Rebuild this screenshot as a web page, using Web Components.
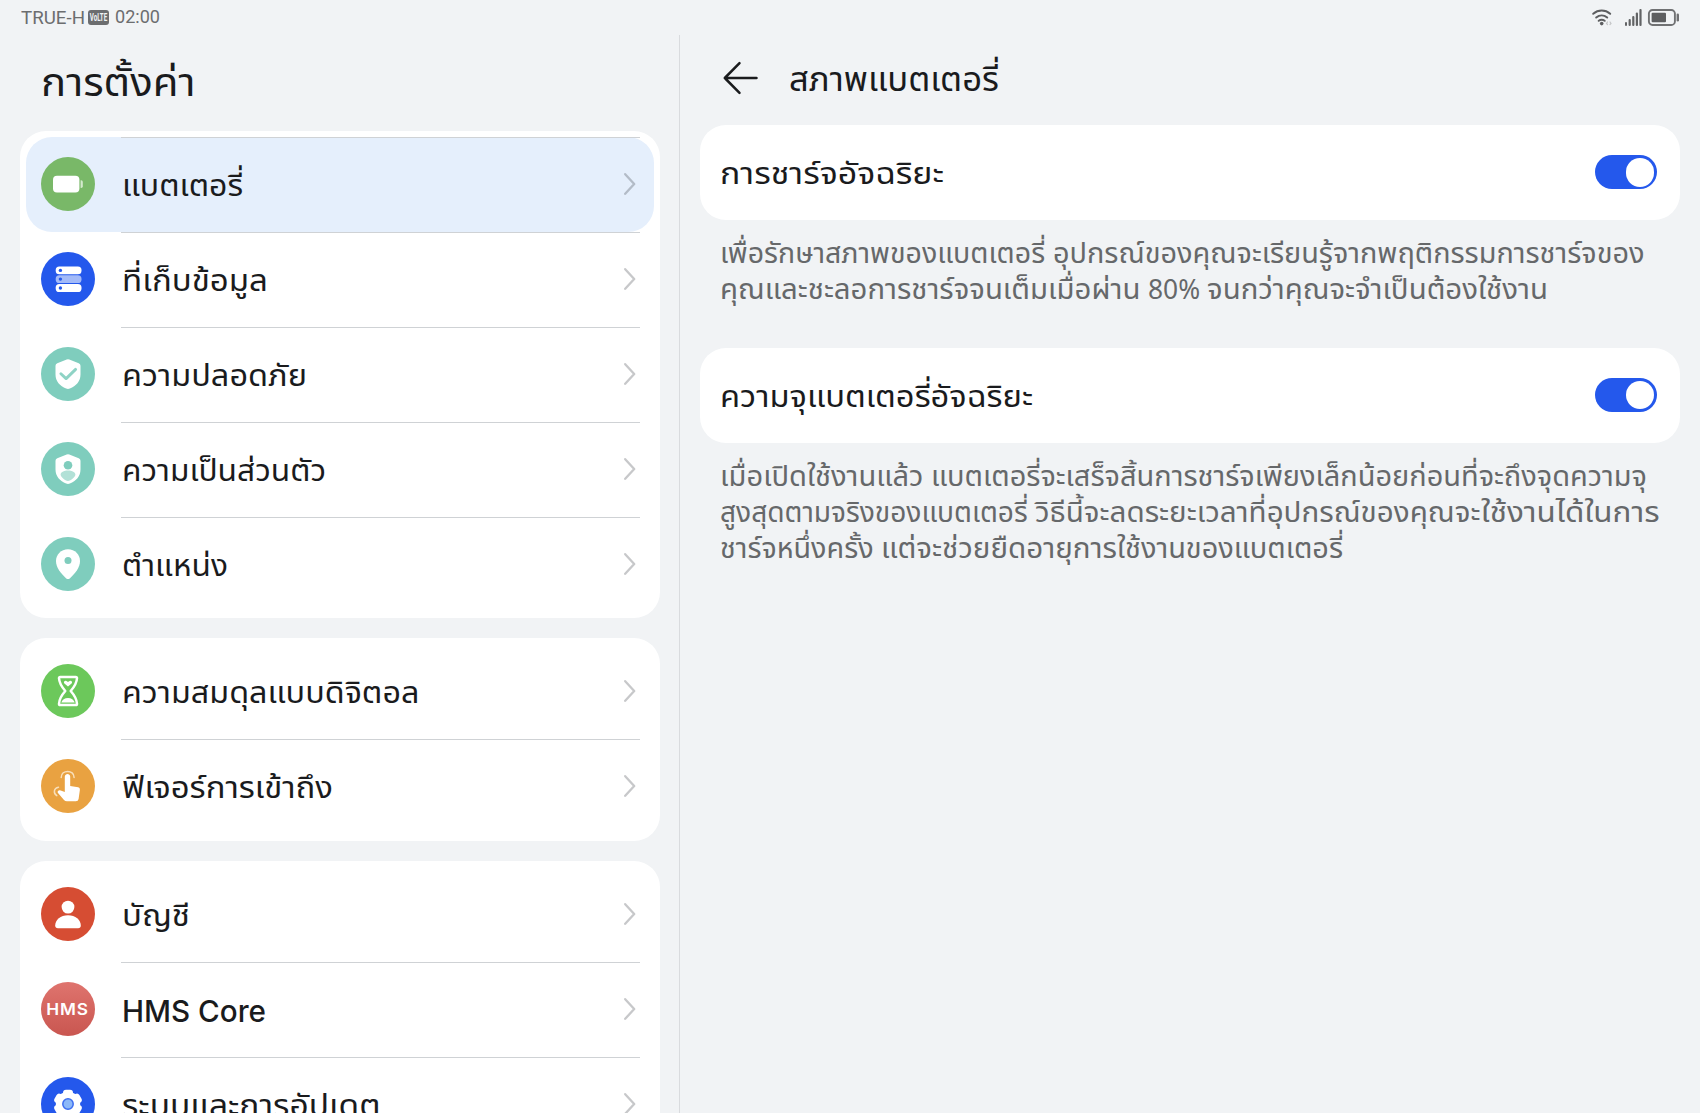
<!DOCTYPE html>
<html lang="th">
<head>
<meta charset="utf-8">
<title>การตั้งค่า</title>
<style>
  html, body { margin: 0; height: 100%; overflow: hidden; }
  body {
    background: #f1f3f5;
    color: #1a1b1d;
    font-family: "Noto Sans Thai", "Noto Sans", sans-serif;
  }
</style>
</head>
<body>
<settings-app></settings-app>

<script>
const ICONS = {
  battery: `
    <circle cx="27" cy="27" r="27" fill="#79b868"/>
    <rect x="12" y="18.8" width="26.4" height="16.6" rx="4" fill="#fff"/>
    <path d="M39.6 23.3h.6q1.6 0 1.6 1.6v4.4q0 1.6-1.6 1.6h-.6z" fill="#d3e9cd"/>`,
  storage: `
    <circle cx="27" cy="27" r="27" fill="#2458ec"/>
    <rect x="14.7" y="14.5" width="25.8" height="7.8" rx="3.6" fill="#fff"/>
    <rect x="14.7" y="23.2" width="25.8" height="7.8" rx="3.6" fill="#a3baf8"/>
    <rect x="14.7" y="32" width="25.8" height="8" rx="3.6" fill="#fff"/>
    <g fill="#2458ec"><circle cx="19.4" cy="18.4" r="1.7"/><circle cx="19.4" cy="27.1" r="1.7"/><circle cx="19.4" cy="36" r="1.7"/></g>`,
  security: `
    <circle cx="27" cy="27" r="27" fill="#7fcdbd"/>
    <path d="M25.7 12.5q1.3-.6 2.6 0l9.4 3.7q1.8.7 1.8 2.6v8.6c0 7-4.5 11.4-10.6 14.2q-1.9.8-3.8 0C19 38.8 14.5 34.4 14.5 27.4v-8.6q0-1.9 1.8-2.6z" fill="#fff"/>
    <path d="M19.9 26.8l5.2 4.8 9.5-9.2" fill="none" stroke="#8fd3c5" stroke-width="2.9" stroke-linecap="round" stroke-linejoin="round"/>`,
  privacy: `
    <circle cx="27" cy="27" r="27" fill="#7fcdbd"/>
    <path d="M25.7 12.5q1.3-.6 2.6 0l9.4 3.7q1.8.7 1.8 2.6v8.6c0 7-4.5 11.4-10.6 14.2q-1.9.8-3.8 0C19 38.8 14.5 34.4 14.5 27.4v-8.6q0-1.9 1.8-2.6z" fill="#fff"/>
    <circle cx="27" cy="23.2" r="4.3" fill="#7fcdbd"/>
    <path d="M27 28.6c4.2 0 7.4 1.7 7.4 4 0 2.4-4.4 6.3-7.4 6.3s-7.4-3.9-7.4-6.3c0-2.3 3.2-4 7.4-4z" fill="#b2e1d7"/>`,
  location: `
    <circle cx="27" cy="27" r="27" fill="#7fcdbd"/>
    <path d="M27 12.3c6.9 0 12 5.2 12 11.7 0 6.6-4.7 12.2-10 17.2q-2 1.7-4 0c-5.3-5-10-10.6-10-17.2 0-6.5 5.1-11.7 12-11.7z" fill="#fff"/>
    <circle cx="27" cy="23.4" r="3.5" fill="#7fcdbd"/>`,
  balance: `
    <circle cx="27" cy="27" r="27" fill="#6cc85b"/>
    <path d="M19.2 12.9h15.6q1.2 0 1.2 1.4c-.3 5.2-2.4 8.3-6.3 12.7 3.9 4.4 6 7.5 6.3 12.7q0 1.4-1.2 1.4H19.2q-1.2 0-1.2-1.4c.3-5.2 2.4-8.3 6.3-12.7-3.9-4.4-6-7.5-6.3-12.7q0-1.4 1.2-1.4z" fill="none" stroke="#fff" stroke-width="2.5" stroke-linejoin="round"/>
    <path d="M27 22.6l-3.6-3.2c-1.3-1.2.2-3.1 2-2.4q1 .4 1.6.9.6-.5 1.6-.9c1.8-.7 3.3 1.2 2 2.4z" fill="#fff"/>
    <path d="M20.3 38.6c.8-2.5 3.4-4.6 6.7-4.6s5.9 2.1 6.7 4.6z" fill="#fff"/>`,
  touch: `
    <circle cx="27" cy="27" r="27" fill="#e9a241"/>
    <path d="M23.8 17.6c.2-1.8 1.4-2.7 2.7-2.7s2.7 1 2.7 2.7v9.3l8 1.4q1.9.4 1.7 2.4l-1.3 9.2q-.4 2.4-2.8 2.4h-8.9q-1.7 0-2.9-1.2L17 34.1q-.9-1.1 0-2.2 1.2-1.1 2.7-.4l4.1 1.4z" fill="#fff"/>
    <g fill="none" stroke="#f8dfba" stroke-width="1.5" stroke-linecap="round">
      <path d="M20.2 18.4c0-8 13-8 12.9 0"/>
      <path d="M17.5 28.2c-5 .8-5.3 6.3-1.7 8.4"/>
    </g>`,
  account: `
    <circle cx="27" cy="27" r="27" fill="#d64d33"/>
    <circle cx="27" cy="20.1" r="6.4" fill="#fff"/>
    <path d="M27 28.3c7.4 0 12.8 4.5 12.8 10.2 0 1.8-1 2.7-2.7 2.7H16.9c-1.7 0-2.7-.9-2.7-2.7 0-5.7 5.4-10.2 12.8-10.2z" fill="#fff"/>`,
  hms: `
    <defs><linearGradient id="g" x1="0" y1="0" x2="0" y2="1"><stop offset="0" stop-color="#df746e"/><stop offset="1" stop-color="#c95650"/></linearGradient></defs>
    <circle cx="27" cy="27" r="27" fill="url(#g)"/>
    <text x="5.3" y="33.3" textLength="42.5" lengthAdjust="spacingAndGlyphs" font-family="Inter, sans-serif" font-size="16.5" font-weight="600" letter-spacing=".8" fill="#fff">HMS</text>`,
  system: `
    <circle cx="27" cy="27" r="27" fill="#2458ec"/>
    <g fill="#fff">
      <circle cx="27" cy="27" r="12.2"/>
      ${[0, 60, 120].map(a => `<rect x="22" y="12.7" width="10" height="28.6" rx="3" transform="rotate(${a} 27 27)"/>`).join('')}
    </g>
    <circle cx="27" cy="27" r="5.2" fill="#8cb8f8" stroke="#3c6df0" stroke-width="1.5"/>`,
};

const GROUPS = [
  [
    { icon: 'battery', label: 'แบตเตอรี่', width: 121, selected: true },
    { icon: 'storage', label: 'ที่เก็บข้อมูล', width: 146 },
    { icon: 'security', label: 'ความปลอดภัย', width: 185 },
    { icon: 'privacy', label: 'ความเป็นส่วนตัว', width: 204 },
    { icon: 'location', label: 'ตำแหน่ง', width: 106 },
  ],
  [
    { icon: 'balance', label: 'ความสมดุลแบบดิจิตอล', width: 297.5 },
    { icon: 'touch', label: 'ฟีเจอร์การเข้าถึง', width: 211 },
  ],
  [
    { icon: 'account', label: 'บัญชี', width: 68 },
    { icon: 'hms', label: 'HMS Core', width: 144, latin: true },
    { icon: 'system', label: 'ระบบและการอัปเดต', width: 258.5 },
  ],
];

// Each note line is a list of [text, width] runs.
const OPTIONS = [
  {
    label: 'การชาร์จอัจฉริยะ',
    width: 224,
    lines: [
      [['เพื่อรักษาสภาพของแบตเตอรี่ ', 332.5], ['อุปกรณ์ของคุณจะเรียนรู้จากพฤติกรรมการชาร์จของ', 591.5]],
      [['คุณและชะลอการชาร์จจนเต็มเมื่อผ่าน ', 428], ['80% ', 59], ['จนกว่าคุณจะจำเป็นต้องใช้งาน', 341]],
    ],
  },
  {
    label: 'ความจุแบตเตอรี่อัจฉริยะ',
    width: 313,
    lines: [
      [['เมื่อเปิดใช้งานแล้ว ', 211], ['แบตเตอรี่จะเสร็จสิ้นการชาร์จเพียงเล็กน้อยก่อนที่จะถึงจุดความจุ', 716]],
      [['สูงสุดตามจริงของแบตเตอรี่ ', 315], ['วิธีนี้จะลดระยะเวลาที่อุปกรณ์ของคุณจะ', 445.5], ['ใช้งานได้ในการ', 178.5]],
      [['ชาร์จหนึ่งครั้ง ', 161], ['แต่จะช่วยยืดอายุการ', 236], ['ใช้งานของแบตเตอรี่', 226]],
    ],
  },
];

// One run of text, stretched so that it takes up the given width.
class FitText extends HTMLElement {
  constructor() {
    super();
    this.attachShadow({ mode: 'open' });
    this.shadowRoot.innerHTML = `
      <style>
        :host { display: block; flex: none; white-space: nowrap; }
        span { display: inline-block; white-space: pre; transform-origin: 0 50%; }
      </style>
      <span><slot></slot></span>
    `;
  }

  connectedCallback() {
    const target = Number(this.getAttribute('width'));
    if (!target) return;
    this.textContent = this.textContent.replace(/ $/, '\u00a0');
    const span = this.shadowRoot.querySelector('span');
    const scale = target / span.getBoundingClientRect().width;
    span.style.transform = `scaleX(${scale.toFixed(4)})`;
    this.style.width = `${target}px`;
  }
}

class StatusBar extends HTMLElement {
  constructor() {
    super();
    this.attachShadow({ mode: 'open' });
    this.shadowRoot.innerHTML = `
      <style>
        :host {
          display: flex;
          align-items: center;
          height: 35px;
          padding: 0 20px 0 21px;
          box-sizing: border-box;
          color: #6c6d6f;
          font: 17.5px/35px Roboto, sans-serif;
        }
        svg { display: block; flex: none; overflow: visible; }
        .carrier { padding-top: 1px; }
        .volte { margin: 0 6px 0 3px; }
        .time { font-size: 18px; margin-top: -2px; }
        .wifi { margin-left: auto; }
        .signal { margin: 0 6px 0 12px; }
      </style>
      <fit-text class="carrier" width="64">TRUE-H</fit-text>
      <svg class="volte" width="21" height="15" viewBox="0 0 21 15">
        <rect width="21" height="15" rx="3" fill="#6c6d6f"/>
        <text x="1.8" y="11" textLength="17.4" lengthAdjust="spacingAndGlyphs" font-family="Roboto, sans-serif" font-size="10" font-weight="700" fill="#f1f3f5">VoLTE</text>
      </svg>
      <fit-text class="time" width="45">02:00</fit-text>
      <svg class="wifi" width="21" height="17" viewBox="0 0 21 17" fill="none" stroke="#5d5e60" stroke-width="2" stroke-linecap="round">
        <path d="M1.2 4.8c5-4.3 12-4.3 17 0M4.2 8.5c3.3-2.8 7.7-2.8 11 0M6.7 11.8c2-1.5 4-1.5 6 0"/>
        <circle cx="9.7" cy="14.6" r="1.8" fill="#5d5e60" stroke="none"/>
        <path d="M15.5 13l-1 1.5 1 1M18 13l1 1.5-1 1" stroke="#c4c5c7" stroke-width="1.2"/>
      </svg>
      <svg class="signal" width="17" height="17" viewBox="0 0 17 17" fill="#626365">
        <rect x="0" y="13" width="2" height="4" rx="1"/>
        <rect x="3.6" y="10" width="2.2" height="7" rx="1"/>
        <rect x="7.2" y="7" width="2.2" height="10" rx="1"/>
        <rect x="10.8" y="3.5" width="2.2" height="13.5" rx="1"/>
        <rect x="14.4" y="0" width="2.2" height="17" rx="1"/>
      </svg>
      <svg width="32" height="17" viewBox="0 0 32 17">
        <rect x=".9" y="1" width="26" height="15" rx="3.6" fill="none" stroke="#707173" stroke-width="1.9"/>
        <rect x="3.6" y="3.7" width="14.4" height="9.6" rx="1" fill="#5d5e60"/>
        <rect x="28.6" y="4.5" width="2.4" height="8" rx="1.2" fill="#707173"/>
      </svg>
    `;
  }
}

class SettingsRow extends HTMLElement {
  constructor() {
    super();
    this.attachShadow({ mode: 'open' });
  }

  connectedCallback() {
    this.shadowRoot.innerHTML = `
      <style>
        :host {
          display: flex;
          align-items: center;
          height: 95px;
          margin: 0 6px;
          padding: 0 18px 1.5px 15px;
          box-sizing: border-box;
          border-radius: 26px;
          font-size: 30.5px;
        }
        :host([selected]) { background: #e5effc; }
        :host([latin]) { font: 450 30px Inter, sans-serif; }
        .icon { flex: none; width: 54px; height: 54px; }
        .label { margin-left: 26.5px; line-height: 40px; padding-top: 6px; }
        :host([latin]) .label { padding-top: 3px; }
        .chevron { margin-left: auto; flex: none; }
      </style>
      <svg class="icon" viewBox="0 0 54 54">${ICONS[this.getAttribute('icon')]}</svg>
      <fit-text class="label" width="${this.getAttribute('width')}">${this.getAttribute('label')}</fit-text>
      <svg class="chevron" width="12" height="24" viewBox="0 0 12 24">
        <path d="M1.2 2.2L10.2 12l-9 9.8" fill="none" stroke="#161820" stroke-opacity=".24" stroke-width="2.3" stroke-linecap="round" stroke-linejoin="round"/>
      </svg>
    `;
  }
}

class SettingsCard extends HTMLElement {
  constructor() {
    super();
    this.attachShadow({ mode: 'open' });
    this.shadowRoot.innerHTML = `
      <style>
        :host {
          display: block;
          padding: 7px 0 6px;
          border-radius: 26px;
          background: #fff;
        }
        :host([scrolled]) { padding: 6px 0 5.5px; }
        ::slotted(hr) {
          height: 1px;
          margin: -0.5px 20px -0.5px 101px;
          border: 0;
          background: #cfd2d5;
          position: relative;
        }
      </style>
      <slot></slot>
    `;
  }
}

class ToggleSwitch extends HTMLElement {
  constructor() {
    super();
    this.attachShadow({ mode: 'open' });
    this.shadowRoot.innerHTML = `
      <style>
        :host {
          display: flex;
          justify-content: flex-end;
          align-items: center;
          width: 62px;
          height: 34px;
          padding-right: 3px;
          box-sizing: border-box;
          border-radius: 17px;
          background: #2458ec;
        }
        i { width: 28.5px; height: 28.5px; border-radius: 50%; background: #fff; }
      </style>
      <i></i>
    `;
  }
}

class OptionBlock extends HTMLElement {
  constructor() {
    super();
    this.attachShadow({ mode: 'open' });
  }

  connectedCallback() {
    this.shadowRoot.innerHTML = `
      <style>
        :host { display: block; }
        .card {
          display: flex;
          align-items: center;
          justify-content: space-between;
          height: 95px;
          padding: 0 23px .5px 20px;
          box-sizing: border-box;
          border-radius: 26px;
          background: #fff;
          font-size: 30.5px;
        }
        .label { line-height: 40px; padding-top: 6px; }
        .note {
          padding: 17px 0 0 20px;
          color: #66686a;
          font-size: 28px;
          line-height: 36.3px;
        }
      </style>
      <div class="card">
        <fit-text class="label" width="${this.getAttribute('width')}">${this.getAttribute('label')}</fit-text>
        <toggle-switch></toggle-switch>
      </div>
      <div class="note"><slot></slot></div>
    `;
  }
}

class SettingsApp extends HTMLElement {
  constructor() {
    super();
    this.attachShadow({ mode: 'open' });
  }

  connectedCallback() {
    const rowHtml = (row) => `<settings-row icon="${row.icon}" label="${row.label}" width="${row.width}"${row.selected ? ' selected' : ''}${row.latin ? ' latin' : ''}></settings-row>`;

    // The first card is scrolled, so the line above its first row still shows.
    const cardsHtml = GROUPS.map((rows, i) => `
      <settings-card${i === 0 ? ' scrolled' : ''}>${i === 0 ? '<hr>' : ''}${rows.map(rowHtml).join('<hr>')}</settings-card>
    `).join('');

    const lineHtml = (runs) => `<div class="line">${runs.map(([text, w]) => `<fit-text width="${w}">${text}</fit-text>`).join('')}</div>`;

    const optionsHtml = OPTIONS.map(o => `
      <option-block label="${o.label}" width="${o.width}">${o.lines.map(lineHtml).join('')}</option-block>
    `).join('');

    this.shadowRoot.innerHTML = `
      <style>
        :host { display: flex; flex-direction: column; height: 100vh; overflow: hidden; }
        main { flex: 1; min-height: 0; display: grid; grid-template-columns: 679px 1fr; }
        aside { display: flex; flex-direction: column; min-height: 0; overflow: hidden; }
        .title { height: 96px; padding: 2px 0 0 41px; box-sizing: border-box; font-size: 39px; line-height: 96px; }
        .cards { display: flex; flex-direction: column; gap: 20px; padding: 0 19px 0 20px; }
        section { border-left: 1px solid #d9dbde; padding: 0 20px; }
        header { display: flex; align-items: center; height: 90px; padding-left: 23px; box-sizing: border-box; }
        header svg { margin-bottom: 4px; }
        header fit-text { margin-left: 31px; font-size: 34px; }
        .options { display: flex; flex-direction: column; gap: 38px; }
        .line { display: flex; }
      </style>
      <status-bar></status-bar>
      <main>
        <aside>
          <fit-text class="title" width="154.5">การตั้งค่า</fit-text>
          <div class="cards">${cardsHtml}</div>
        </aside>
        <section>
          <header>
            <svg width="35" height="34" viewBox="0 0 35 34" fill="none" stroke="#1a1b1d" stroke-width="2.5" stroke-linecap="round" stroke-linejoin="round">
              <path d="M16.5 2.2L1.8 17l14.7 14.8M1.8 17H33.5"/>
            </svg>
            <fit-text width="210">สภาพแบตเตอรี่</fit-text>
          </header>
          <div class="options">${optionsHtml}</div>
        </section>
      </main>
    `;
  }
}

customElements.define('fit-text', FitText);
customElements.define('status-bar', StatusBar);
customElements.define('settings-row', SettingsRow);
customElements.define('settings-card', SettingsCard);
customElements.define('toggle-switch', ToggleSwitch);
customElements.define('option-block', OptionBlock);
customElements.define('settings-app', SettingsApp);
</script>
</body>
</html>
